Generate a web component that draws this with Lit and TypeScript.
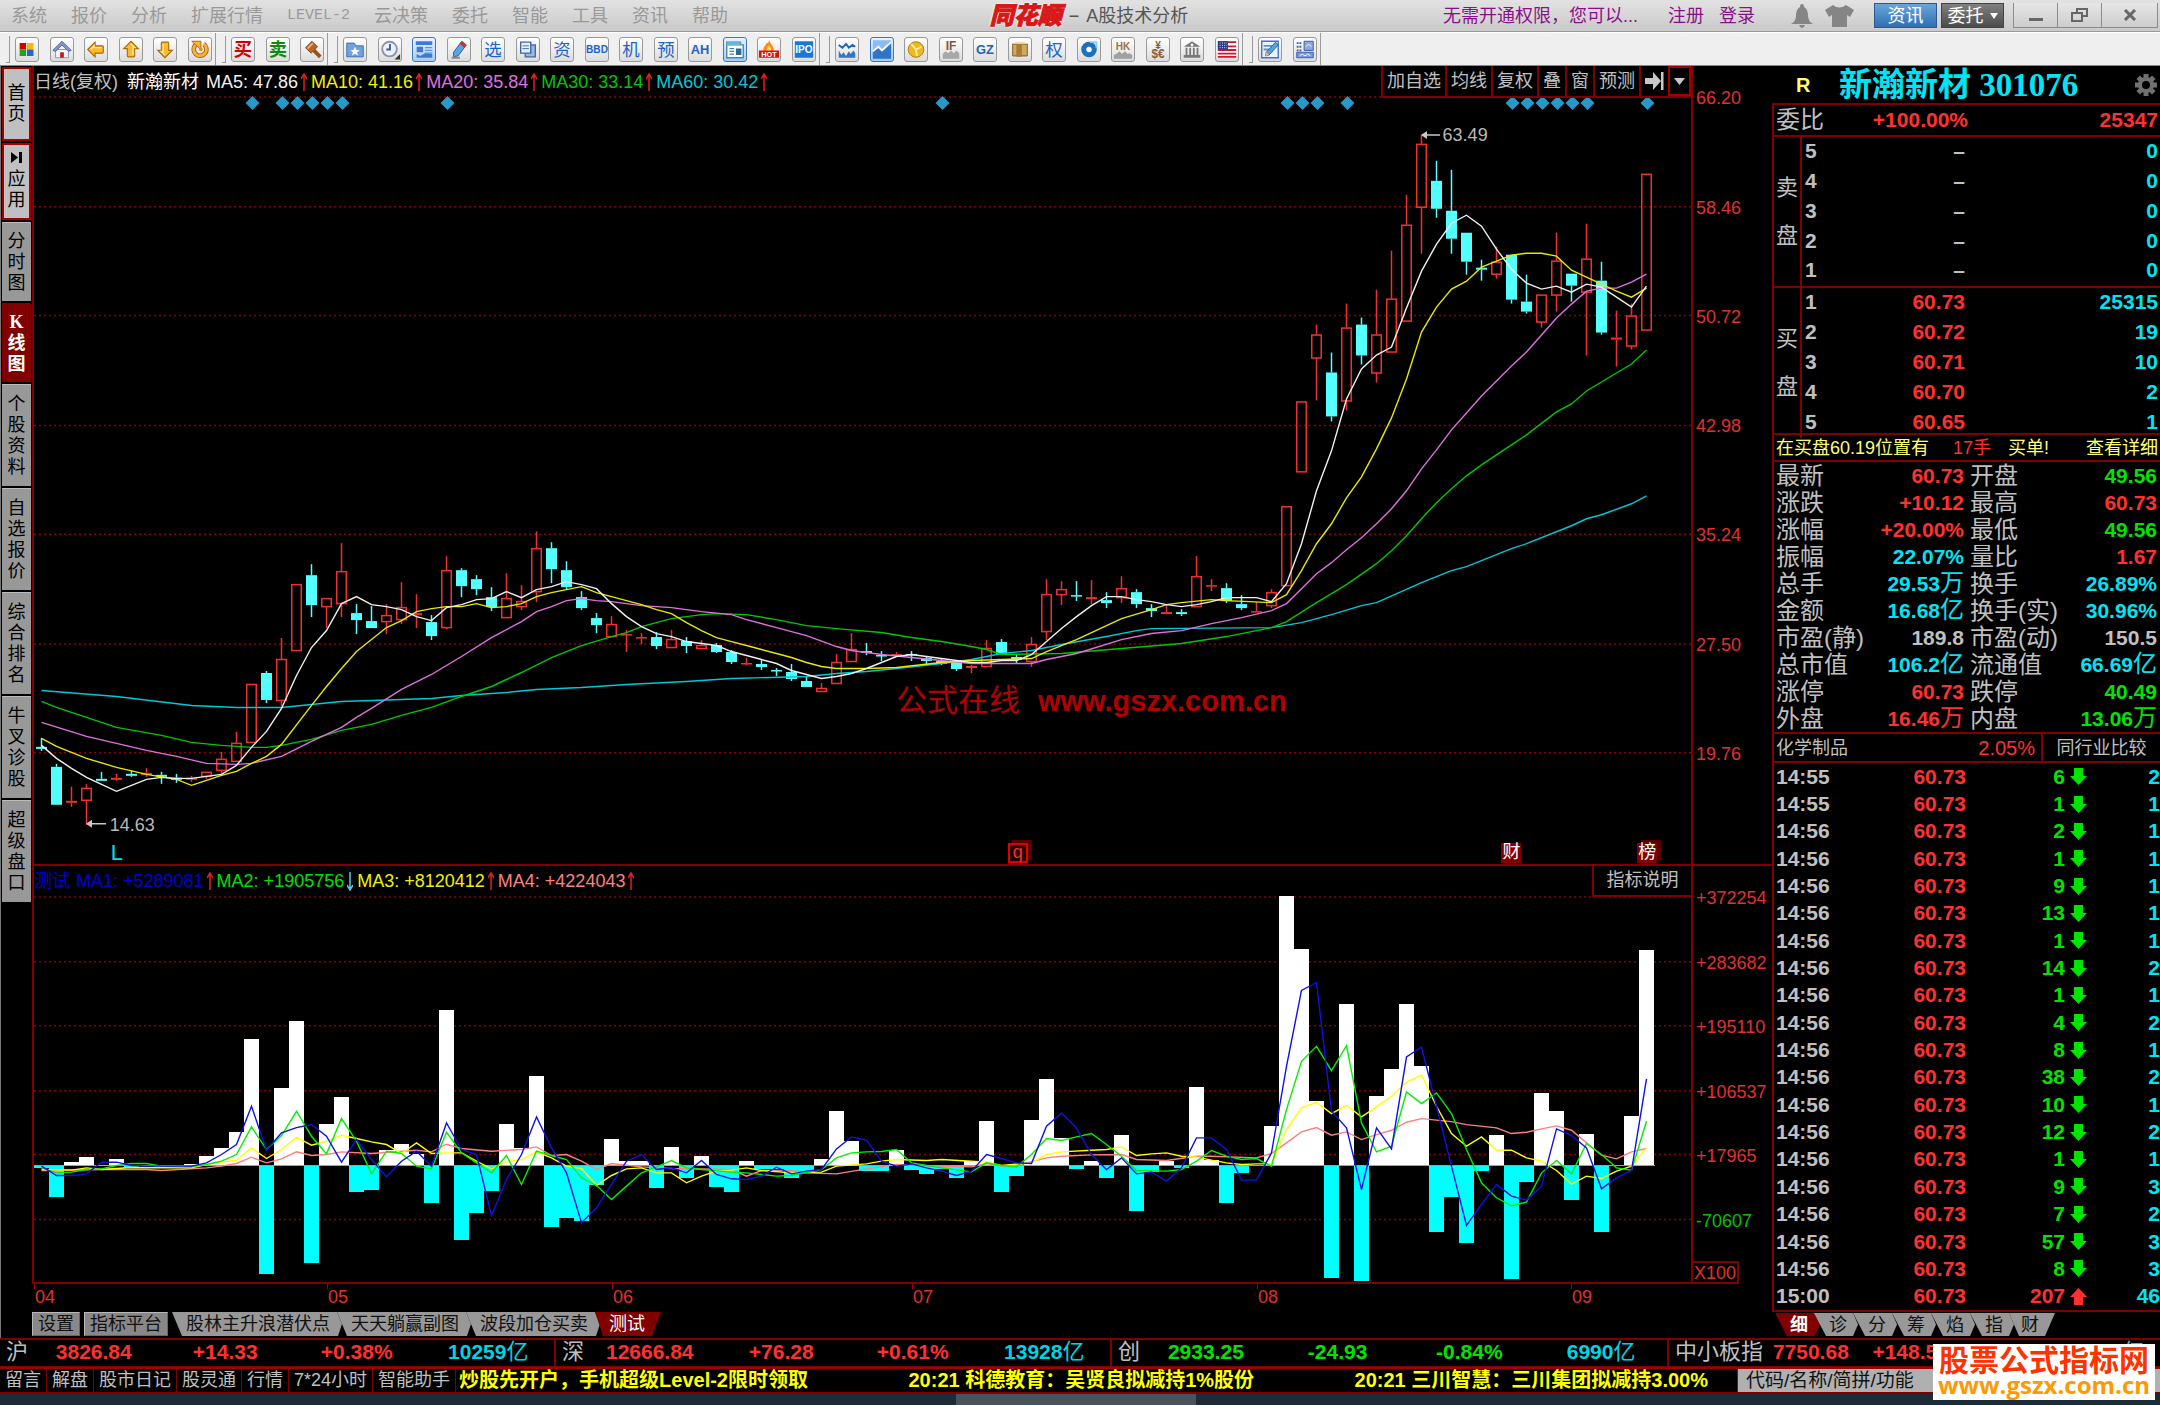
import { LitElement, html, css, svg, nothing } from "lit";
import { customElement } from "lit/decorators.js";
import { classMap } from "lit/directives/class-map.js";
import { styleMap } from "lit/directives/style-map.js";

/* ---------- data ---------- */

type Candle = [number, number, number, number, number];
type Pt = [number, number];

const STEP = 15;
const cx = (i: number) => 41.5 + STEP * i;

// up flag, body top, body bottom, high, low (plot coordinates)
const CANDLES: Candle[] = [
  [0, 748, 750, 739, 752], [0, 768, 806, 765, 806], [1, 802, 804, 788, 808], [1, 789, 801, 785, 826], [0, 780, 782, 773, 782],
  [1, 779, 781, 775, 782], [0, 775, 777, 772, 778], [1, 774, 776, 769, 778], [0, 776, 778, 773, 785], [0, 779, 781, 775, 784],
  [1, 779, 781, 777, 783], [1, 773, 777, 773, 780], [1, 760, 771, 753, 775], [1, 744, 762, 733, 762], [1, 685, 743, 685, 743],
  [0, 674, 701, 672, 704], [1, 660, 701, 639, 707], [1, 585, 651, 585, 651], [0, 576, 606, 565, 618], [1, 599, 607, 599, 629],
  [1, 572, 604, 544, 618], [0, 614, 621, 605, 635], [0, 622, 629, 607, 629], [1, 616, 622, 605, 635], [1, 608, 620, 583, 625],
  [1, 614, 616, 595, 629], [0, 623, 637, 616, 641], [1, 571, 628, 557, 630], [0, 571, 587, 569, 598], [0, 580, 590, 576, 596],
  [0, 598, 608, 588, 612], [1, 599, 618, 574, 618], [1, 602, 607, 586, 611], [1, 549, 592, 532, 603], [0, 549, 570, 543, 584],
  [0, 571, 588, 562, 590], [0, 598, 609, 592, 611], [0, 619, 626, 614, 634], [1, 625, 637, 617, 637], [1, 635, 636, 631, 653],
  [1, 638, 639, 634, 645], [0, 638, 647, 633, 650], [1, 640, 648, 631, 648], [0, 642, 647, 638, 654], [1, 646, 649, 641, 649],
  [0, 646, 653, 644, 654], [0, 653, 663, 651, 665], [1, 664, 665, 659, 666], [0, 665, 668, 661, 671], [0, 671, 672, 669, 677],
  [0, 673, 680, 665, 682], [0, 682, 688, 677, 688], [1, 689, 692, 684, 692], [1, 663, 684, 655, 684], [1, 650, 662, 634, 663],
  [0, 652, 654, 644, 656], [0, 656, 657, 652, 662], [1, 655, 657, 653, 658], [0, 655, 656, 652, 662], [0, 659, 662, 658, 666],
  [0, 662, 665, 660, 666], [0, 662, 670, 662, 672], [1, 667, 669, 666, 674], [1, 649, 667, 641, 667], [0, 643, 655, 640, 656],
  [0, 658, 661, 655, 664], [1, 645, 662, 638, 668], [1, 595, 632, 580, 641], [1, 590, 595, 582, 606], [0, 596, 597, 582, 602],
  [1, 598, 600, 581, 605], [0, 601, 604, 593, 609], [1, 589, 598, 577, 604], [0, 593, 605, 590, 609], [0, 609, 612, 605, 618],
  [1, 613, 615, 605, 615], [0, 613, 615, 610, 617], [1, 577, 607, 557, 607], [1, 586, 587, 580, 592], [0, 589, 602, 584, 604],
  [0, 605, 609, 596, 611], [1, 612, 613, 603, 613], [1, 593, 606, 590, 609], [1, 507, 586, 507, 586], [1, 402, 472, 402, 472],
  [1, 335, 358, 325, 401], [0, 373, 417, 353, 422], [1, 328, 401, 304, 411], [0, 325, 356, 318, 365], [1, 335, 373, 290, 383],
  [1, 299, 352, 251, 352], [1, 225, 321, 195, 321], [1, 144, 207, 135, 254], [0, 181, 209, 161, 218], [0, 211, 239, 170, 254],
  [0, 233, 262, 233, 275], [0, 268, 270, 260, 281], [1, 262, 274, 247, 279], [0, 255, 300, 255, 304], [0, 302, 312, 275, 314],
  [1, 295, 322, 295, 328], [1, 261, 295, 233, 312], [0, 274, 286, 274, 302], [1, 259, 292, 224, 356], [0, 281, 333, 262, 335],
  [1, 338, 340, 311, 367], [1, 316, 346, 304, 350], [1, 174, 330, 174, 330],
];

const MA_LINES: { color: string; pts: Pt[] }[] = [
  { color: "#f0f0f0", pts: [[0, 746], [1, 759], [2, 769], [3, 778], [4, 785], [5, 792], [6, 786], [7, 780], [8, 778], [9, 779], [10, 779], [11, 777], [12, 775], [13, 766], [14, 748], [15, 732], [16, 709], [17, 676], [18, 648], [19, 631], [20, 604], [21, 597], [22, 605], [23, 607], [24, 610], [25, 617], [26, 621], [27, 608], [28, 605], [29, 600], [30, 599], [31, 592], [32, 598], [33, 590], [34, 587], [35, 582], [36, 585], [37, 589], [38, 604], [39, 617], [40, 627], [41, 634], [42, 637], [43, 642], [44, 644], [45, 646], [46, 652], [47, 656], [48, 660], [49, 664], [50, 671], [51, 675], [52, 679], [53, 677], [54, 674], [55, 669], [56, 663], [57, 657], [58, 655], [59, 657], [60, 659], [61, 661], [62, 663], [63, 663], [64, 661], [65, 661], [66, 655], [67, 642], [68, 629], [69, 617], [70, 606], [71, 597], [72, 597], [73, 600], [74, 602], [75, 605], [76, 607], [77, 605], [78, 602], [79, 598], [80, 598], [81, 598], [82, 602], [83, 584], [84, 544], [85, 491], [86, 451], [87, 399], [88, 369], [89, 355], [90, 347], [91, 308], [92, 271], [93, 244], [94, 223], [95, 215], [96, 226], [97, 249], [98, 269], [99, 283], [100, 289], [101, 286], [102, 292], [103, 284], [104, 287], [105, 297], [106, 307], [107, 286]] },
  { color: "#e8e800", pts: [[0, 739], [1, 747], [3, 759], [5, 768], [7, 775], [9, 780], [10, 786], [11, 781], [12, 776], [13, 772], [14, 764], [15, 757], [16, 745], [18, 706], [19, 687], [20, 669], [21, 652], [22, 640], [23, 628], [24, 621], [25, 612], [26, 609], [27, 607], [28, 607], [29, 604], [30, 608], [31, 607], [32, 604], [33, 597], [34, 593], [35, 590], [36, 587], [37, 593], [38, 597], [39, 601], [40, 605], [41, 610], [42, 614], [43, 623], [44, 631], [45, 638], [46, 642], [47, 646], [48, 650], [49, 654], [50, 658], [51, 663], [52, 667], [53, 669], [55, 669], [57, 668], [60, 663], [62, 661], [64, 660], [66, 659], [67, 652], [69, 640], [71, 626], [72, 619], [74, 610], [75, 605], [76, 603], [78, 600], [79, 601], [82, 603], [83, 595], [84, 571], [85, 544], [86, 524], [87, 498], [88, 477], [89, 449], [90, 418], [91, 379], [92, 332], [93, 307], [94, 289], [95, 281], [96, 267], [97, 261], [98, 255], [99, 253], [100, 253], [101, 256], [102, 270], [103, 277], [104, 284], [105, 291], [106, 297], [107, 288]] },
  { color: "#e070e0", pts: [[0, 723], [3, 737], [7, 751], [9, 757], [11, 764], [13, 765], [14, 764], [16, 757], [18, 742], [20, 728], [21, 718], [22, 709], [24, 690], [26, 675], [28, 657], [30, 638], [32, 622], [33, 612], [34, 607], [35, 601], [36, 599], [37, 601], [38, 602], [40, 606], [42, 608], [44, 612], [46, 615], [47, 620], [49, 628], [51, 636], [53, 647], [54, 651], [56, 655], [58, 658], [60, 661], [62, 664], [66, 664], [67, 660], [69, 654], [72, 640], [74, 634], [76, 631], [78, 624], [80, 618], [82, 611], [83, 604], [84, 589], [85, 574], [86, 563], [87, 550], [88, 538], [89, 524], [90, 509], [91, 491], [92, 469], [93, 450], [94, 430], [95, 413], [96, 396], [97, 381], [98, 366], [99, 352], [100, 335], [101, 318], [102, 304], [103, 291], [104, 288], [105, 288], [106, 282], [107, 274]] },
  { color: "#00c800", pts: [[0, 702], [1, 708], [3, 718], [5, 728], [8, 736], [10, 743], [12, 746], [14, 748], [15, 748], [16, 746], [18, 740], [20, 731], [22, 725], [24, 716], [26, 708], [28, 697], [30, 687], [32, 673], [34, 658], [36, 646], [38, 637], [39, 633], [40, 627], [42, 619], [43, 617], [44, 615], [45, 614], [47, 615], [49, 620], [51, 626], [53, 629], [56, 633], [58, 638], [60, 642], [62, 647], [63, 650], [64, 655], [68, 654], [72, 649], [76, 644], [79, 637], [82, 628], [83, 622], [85, 603], [87, 585], [89, 564], [90, 551], [91, 536], [92, 519], [93, 503], [94, 489], [95, 476], [96, 465], [98, 445], [99, 435], [101, 412], [102, 404], [103, 391], [105, 373], [106, 364], [107, 350]] },
  { color: "#00c8d8", pts: [[0, 691], [5, 697], [10, 706], [13, 708], [16, 708], [18, 705], [20, 702], [24, 700], [26, 699], [28, 696], [31, 693], [33, 690], [36, 688], [39, 685], [43, 682], [46, 679], [51, 677], [53, 674], [55, 672], [57, 669], [60, 664], [62, 660], [64, 654], [66, 651], [68, 645], [71, 637], [73, 631], [74, 629], [82, 628], [84, 623], [86, 615], [88, 606], [89, 603], [92, 583], [94, 571], [95, 567], [98, 549], [99, 544], [102, 526], [103, 519], [104, 515], [106, 504], [107, 496]] },
];

const ZERO = 1166;
// bar tips; above ZERO is a white bar, below is a cyan one
const BARS = [1168, 1198, 1162, 1157, 1165, 1159, 1168, 1165, 1167, 1167, 1164, 1156, 1148, 1132, 1039, 1275, 1088, 1021, 1264, 1124, 1097, 1193, 1191, 1150, 1144, 1154, 1204, 1010, 1241, 1214, 1192, 1124, 1148, 1076, 1228, 1219, 1222, 1186, 1139, 1161, 1161, 1189, 1147, 1179, 1156, 1188, 1193, 1161, 1170, 1170, 1179, 1174, 1159, 1111, 1141, 1172, 1172, 1150, 1171, 1175, 1170, 1179, 1161, 1121, 1193, 1177, 1120, 1079, 1138, 1169, 1161, 1179, 1135, 1212, 1173, 1161, 1168, 1087, 1160, 1204, 1174, 1165, 1126, 896, 949, 1101, 1279, 1004, 1282, 1096, 1069, 1004, 1066, 1233, 1198, 1244, 1172, 1135, 1280, 1183, 1093, 1111, 1201, 1134, 1233, 1165, 1116, 950];

// oscillator lines keep three steps per pixel, counted from y = 840
const OSC_LINES: { color: string; pts: Pt[] }[] = [
  { color: "#ff8080", pts: [[0, 993], [4, 990], [7, 990], [8, 993], [11, 985], [12, 980], [13, 972], [14, 953], [15, 970], [16, 958], [17, 937], [18, 948], [19, 945], [20, 937], [22, 942], [25, 932], [26, 937], [27, 914], [28, 927], [30, 935], [32, 930], [33, 922], [34, 948], [35, 945], [36, 965], [37, 990], [38, 972], [40, 982], [42, 987], [46, 990], [47, 1010], [48, 993], [50, 993], [51, 1000], [53, 1003], [55, 988], [57, 975], [60, 980], [62, 982], [63, 972], [64, 980], [65, 978], [67, 955], [68, 950], [70, 946], [72, 945], [73, 960], [75, 963], [77, 950], [78, 950], [81, 955], [82, 942], [83, 910], [84, 877], [85, 864], [86, 887], [87, 877], [88, 900], [89, 885], [90, 872], [91, 848], [92, 837], [94, 846], [95, 855], [97, 865], [98, 882], [99, 878], [100, 868], [101, 859], [102, 872], [103, 910], [104, 947], [105, 958], [106, 937], [107, 927]] },
  { color: "#ffff00", pts: [[0, 990], [2, 992], [3, 985], [4, 990], [6, 984], [10, 985], [11, 975], [12, 968], [13, 962], [14, 925], [15, 957], [16, 930], [17, 893], [18, 917], [19, 905], [20, 887], [21, 897], [22, 907], [23, 915], [24, 942], [25, 910], [26, 942], [27, 940], [28, 940], [29, 965], [30, 988], [31, 967], [32, 960], [33, 937], [34, 955], [35, 980], [36, 987], [37, 1038], [38, 1008], [39, 988], [40, 985], [41, 1000], [42, 1000], [43, 1030], [44, 1010], [45, 995], [46, 992], [47, 985], [48, 993], [50, 1000], [52, 998], [53, 980], [55, 973], [56, 965], [57, 960], [59, 963], [60, 960], [62, 965], [63, 968], [64, 978], [66, 970], [67, 945], [68, 937], [70, 932], [71, 930], [72, 922], [73, 948], [74, 943], [75, 940], [76, 950], [77, 953], [78, 962], [79, 970], [80, 975], [81, 973], [82, 973], [83, 870], [84, 805], [85, 788], [86, 822], [87, 797], [88, 832], [89, 802], [90, 770], [91, 728], [92, 706], [93, 800], [94, 882], [95, 920], [96, 892], [97, 932], [98, 932], [99, 955], [100, 965], [101, 993], [102, 1034], [103, 1010], [104, 1017], [105, 995], [106, 980], [107, 925]] },
  { color: "#00f000", pts: [[0, 985], [1, 1000], [2, 998], [3, 990], [4, 988], [5, 978], [6, 972], [7, 972], [8, 980], [10, 982], [11, 975], [12, 965], [13, 945], [14, 862], [15, 930], [16, 888], [17, 815], [18, 890], [19, 943], [20, 837], [21, 905], [22, 1003], [23, 935], [24, 942], [25, 980], [26, 988], [27, 878], [28, 940], [29, 970], [30, 1000], [31, 948], [32, 1035], [33, 935], [34, 948], [35, 960], [36, 1015], [37, 1038], [38, 1080], [39, 1040], [40, 1000], [41, 982], [42, 963], [43, 985], [44, 990], [46, 998], [47, 1000], [49, 1010], [50, 1008], [52, 990], [53, 955], [54, 940], [55, 937], [56, 936], [57, 930], [58, 970], [60, 985], [62, 997], [63, 970], [64, 978], [65, 982], [66, 945], [67, 897], [68, 903], [69, 892], [70, 882], [71, 915], [72, 950], [73, 993], [75, 995], [76, 990], [77, 965], [78, 933], [79, 950], [80, 960], [81, 957], [82, 980], [83, 810], [84, 665], [85, 620], [86, 693], [87, 618], [88, 850], [89, 937], [90, 920], [91, 757], [92, 792], [93, 760], [94, 822], [95, 930], [96, 1030], [97, 1075], [98, 1099], [99, 1088], [100, 1000], [101, 963], [102, 1003], [103, 912], [104, 945], [105, 985], [106, 992], [107, 845]] },
  { color: "#1010e8", pts: [[0, 980], [1, 1008], [2, 1008], [3, 1003], [4, 968], [5, 968], [6, 978], [7, 980], [10, 980], [11, 970], [12, 945], [13, 915], [14, 800], [15, 932], [16, 880], [17, 864], [18, 855], [19, 890], [20, 968], [21, 900], [22, 960], [23, 1012], [24, 965], [25, 935], [26, 980], [27, 850], [28, 930], [29, 945], [30, 1128], [31, 1020], [32, 945], [33, 832], [34, 925], [35, 1000], [36, 1150], [37, 1105], [38, 1035], [39, 965], [40, 945], [41, 990], [42, 985], [43, 1000], [44, 963], [45, 1005], [46, 1018], [47, 1020], [48, 1010], [49, 983], [50, 1003], [51, 995], [52, 990], [53, 928], [54, 892], [55, 902], [56, 965], [57, 980], [58, 973], [59, 985], [60, 995], [61, 1008], [62, 995], [63, 945], [64, 957], [65, 970], [66, 972], [67, 860], [68, 820], [69, 865], [70, 945], [71, 990], [72, 955], [73, 1003], [74, 998], [75, 1025], [76, 985], [77, 895], [78, 895], [79, 930], [80, 1022], [81, 1022], [82, 940], [83, 680], [84, 452], [85, 428], [86, 815], [87, 865], [88, 1050], [89, 865], [90, 928], [91, 652], [92, 622], [93, 800], [94, 980], [95, 1158], [96, 1095], [97, 1035], [98, 1070], [99, 1082], [100, 1040], [101, 868], [102, 888], [103, 925], [104, 1048], [105, 1015], [106, 993], [107, 718]] },
];

const DIAMONDS = [14, 16, 17, 18, 19, 20, 27, 60, 83, 84, 85, 87, 98, 99, 100, 101, 102, 103, 107];
const PRICE_GRID: [string, number][] = [["66.20", 97], ["58.46", 207], ["50.72", 316], ["42.98", 426], ["35.24", 535], ["27.50", 645], ["19.76", 754]];
const OSC_GRID: [string, number][] = [["+372254", 897], ["+283682", 962], ["+195110", 1026], ["+106537", 1091], ["+17965", 1155], ["-70607", 1220]];
const MONTHS: [string, number][] = [["04", 34], ["05", 327], ["06", 612], ["07", 912], ["08", 1257], ["09", 1571]];

const MENU = ["系统", "报价", "分析", "扩展行情", "LEVEL-2", "云决策", "委托", "智能", "工具", "资讯", "帮助"];
const SIDE = ["首页", "应用", "分时图", "K线图", "个股资料", "自选报价", "综合排名", "牛叉诊股", "超级盘口"];
const MA_HEAD = [["MA5: 47.86", "#f0f0f0"], ["MA10: 41.16", "#f0f000"], ["MA20: 35.84", "#e070e0"], ["MA30: 33.14", "#00c800"], ["MA60: 30.42", "#00c8d8"]];
const OSC_HEAD = [["MA1: +5289081", "#0000d0", "u"], ["MA2: +1905756", "#00e000", "d"], ["MA3: +8120412", "#f0f000", "u"], ["MA4: +4224043", "#ff8080", "u"]];

const BUYS = [["1", "60.73", "25315"], ["2", "60.72", "19"], ["3", "60.71", "10"], ["4", "60.70", "2"], ["5", "60.65", "1"]];
const DETAILS = [
  ["最新", "60.73", "r", "开盘", "49.56", "g"],
  ["涨跌", "+10.12", "r", "最高", "60.73", "r"],
  ["涨幅", "+20.00%", "r", "最低", "49.56", "g"],
  ["振幅", "22.07%", "c", "量比", "1.67", "r"],
  ["总手", "29.53万", "c", "换手", "26.89%", "c"],
  ["金额", "16.68亿", "c", "换手(实)", "30.96%", "c"],
  ["市盈(静)", "189.8", "w", "市盈(动)", "150.5", "w"],
  ["总市值", "106.2亿", "c", "流通值", "66.69亿", "c"],
  ["涨停", "60.73", "r", "跌停", "40.49", "g"],
  ["外盘", "16.46万", "r", "内盘", "13.06万", "g"],
];
const TICKS: [string, number, number][] = [
  ["14:55", 6, 2], ["14:55", 1, 1], ["14:56", 2, 1], ["14:56", 1, 1], ["14:56", 9, 1], ["14:56", 13, 1], ["14:56", 1, 1],
  ["14:56", 14, 2], ["14:56", 1, 1], ["14:56", 4, 2], ["14:56", 8, 1], ["14:56", 38, 2], ["14:56", 10, 1], ["14:56", 12, 2],
  ["14:56", 1, 1], ["14:56", 9, 3], ["14:56", 7, 2], ["14:56", 57, 3], ["14:56", 8, 3], ["15:00", 207, 46],
];
const INDEXES = [
  ["沪", "3826.84", "+14.33", "+0.38%", "10259亿", "r"],
  ["深", "12666.84", "+76.28", "+0.61%", "13928亿", "r"],
  ["创", "2933.25", "-24.93", "-0.84%", "6990亿", "g"],
  ["中小板指", "7750.68", "+148.57", "+1.95%", "1797亿", "r"],
];
const LINKS = ["留言", "解盘", "股市日记", "股灵通", "行情", "7*24小时", "智能助手"];
const NEWS = ["炒股先开户，手机超级Level-2限时领取", "20:21 科德教育：吴贤良拟减持1%股份", "20:21 三川智慧：三川集团拟减持3.00%"];

// splits off a trailing unit such as 万 or 亿, which is set lighter and larger than the digits
const num = (s: string) => {
  const m = /^(.*?)([万亿])$/.exec(s);
  return m ? html`${m[1]}<span class="unit">${m[2]}</span>` : s;
};

/* ---------- toolbar icons, 24 x 24 ---------- */

const label = (t: string, color: string, size: number, y: number, bold = false) =>
  svg`<text x="12" y=${y} text-anchor="middle" font-size=${size} font-weight=${bold ? 700 : 400} fill=${color}>${t}</text>`;
const arrow = (deg: number) => svg`<path transform="rotate(${deg} 12 12)" d="M3 12 L11 4 V8 H19 Q20 8 20 9 V15 Q20 16 19 16 H11 V20 Z" fill="#fbb92c" stroke="#a86a06" stroke-width="1.2"/><path transform="rotate(${deg} 12 12)" d="M6 12 L10 8 V10 H18" fill="none" stroke="#ffe79a" stroke-width="1.5"/>`;

const ICONS: { [k: string]: [string, unknown, string?] } = {
  home4: ["版面", svg`<path d="M4 5h7v7H4z" fill="#d40000"/><path d="M12 5h7v7h-7z" fill="#ffb400"/><path d="M4 12h7v7H4z" fill="#18a818"/><path d="M12 12h7v7h-7z" fill="#2864d8"/>`],
  house: ["主页", svg`<path d="M5 12h14v9H5z" fill="#f4f4fa" stroke="#8a90a8"/><path d="M2 13 L12 3 L22 13 L19 14 L12 7 L5 14 Z" fill="#8496d6" stroke="#4a5ca6"/><path d="M10 15h4v6h-4z" fill="#c01818"/>`],
  left: ["后退", arrow(0)],
  up: ["上翻", arrow(90)],
  down: ["下翻", arrow(270)],
  cycle: ["刷新", svg`<path d="M16 6 A7 7 0 1 1 7 7" fill="none" stroke="#a86a06" stroke-width="5"/><path d="M16 6 A7 7 0 1 1 7 7" fill="none" stroke="#fbb040" stroke-width="3"/><path d="M3 3 H13 V12 Z" fill="#fbb040" stroke="#a86a06"/><circle cx="13" cy="12" r="2" fill="#e88a10"/>`],
  buy: ["买入", label("买", "#d00000", 20, 19, true)],
  sell: ["卖出", label("卖", "#108a10", 20, 19, true)],
  gavel: ["竞拍", svg`<path d="M5 10 L12 3 L18 9 L11 16 Z" fill="#b8662c" stroke="#7a4010"/><path d="M7 11 L13 5" stroke="#e8b080" stroke-width="2"/><path d="M14 13 L21 20" stroke="#9a5020" stroke-width="4"/>`],
  folder: ["自选夹", svg`<path d="M3 5h8l2 3h8v12H3z" fill="#6fa3e0" stroke="#3a6cb0"/><path d="M12 9l1.500 3.500 3.500.3-2.700 2.200.900 3.500-3.200-2-3.200 2 .9-3.500L7 12.800l3.500-.3z" fill="#fff"/>`],
  clock: ["定时", svg`<circle cx="11.500" cy="11.500" r="8" fill="#eef2fa" stroke="#8c94a4" stroke-width="2"/><path d="M12 6v6H8" fill="none" stroke="#3858a8" stroke-width="2"/><path d="M23 17v6h-6z" fill="#333"/>`],
  page: ["资讯页", svg`<path d="M3 3h18v4H3z" fill="#3c7cd0"/><path d="M4 9h7v6H4z" fill="#3c7cd0"/><path d="M13 10h8M13 13h8M13 16h8" stroke="#5a94e0" stroke-width="1.500"/><path d="M4 20v-3l4 2 5-3 8 1v4H4z" fill="#3c7cd0"/>`, "blue"],
  pen: ["画线", svg`<path d="M6 20 L6 15 L15 3 L20 7 L11 19 Z" fill="#5aa4e4" stroke="#2a5c98"/><path d="M15 3 L20 7 L18 10 L13 6 Z" fill="#d03020"/><path d="M4 21h9" stroke="#888" stroke-width="2"/>`],
  pick: ["选股", label("选", "#1e64c8", 19, 19)],
  copy: ["复制", svg`<path d="M9 7h11v13H9z" fill="#9ab8e0" stroke="#3c68a8" stroke-width="1.500"/><path d="M4 4h11v12H4z" fill="#e8f0fb" stroke="#3c68a8" stroke-width="1.500"/><path d="M6 8h7M6 11h7" stroke="#3c68a8"/>`],
  fund: ["资金", label("资", "#1e64c8", 19, 19)],
  bbd: ["BBD", label("BBD", "#1e64c8", 11, 16, true)],
  org: ["机构", label("机", "#1e64c8", 19, 19)],
  fore: ["预测", label("预", "#1e64c8", 19, 19)],
  ah: ["AH股", label("AH", "#1e64c8", 14, 17, true)],
  news: ["新闻", svg`<path d="M3 4h15v3h3v14H3z" fill="#fff" stroke="#3a88b8" stroke-width="1.500"/><path d="M3 4h15v4H3z" fill="#6cb4dc"/><path d="M6 11h5M6 14h5M6 17h5" stroke="#3a88b8" stroke-width="1.500"/><path d="M13 11h6v7h-6z" fill="#2c6890"/>`, "blue"],
  hot: ["热点", svg`<path d="M12 1 C13 6 18 8 17 14 H6 C5 9 9 8 9 5 C11 6 12 4 12 1Z" fill="#ff8a18"/><path d="M12 7 C13 10 15 10 14 14 H9 C9 11 11 10 12 7Z" fill="#ffe060"/><path d="M1 13h22v8H1z" fill="#d81010"/>${label("HOT", "#fff", 8, 20, true)}`],
  ipo: ["IPO", svg`<path d="M2 3h20v18H2z" fill="#1878d8"/>${label("IPO", "#fff", 11, 16, true)}`],
  wave: ["波段", svg`<path d="M3 7l4 3 4-4 3 4 4-3 3 2" fill="none" stroke="#1e64b8" stroke-width="2"/><path d="M3 21v-8l3 5 2-3 3 4 3-5 2 3 3-4 2 3v5z" fill="#2f78c0"/>`],
  trend: ["走势", svg`<path d="M2 2h20v20H2z" fill="#8fbcf0"/><path d="M2 22v-8l6-5 4 4 10-9v18z" fill="#2f74c8"/><path d="M2 14l6-5 4 4 10-9" fill="none" stroke="#fff" stroke-width="2"/>`, "blue"],
  coin: ["黄金", svg`<circle cx="12" cy="12" r="8.500" fill="#f0b818" stroke="#a87c08"/><path d="M12 12L7 6M12 12l6-3M12 12l1 7" stroke="#fff0a8" stroke-width="2"/>`],
  fut: ["股指期货", svg`${label("IF", "#8a5030", 13, 12, true)}<path d="M3 22v-5l3-3 3 2 3-3 3 3 3-3 3 3v6z" fill="#a8a8a8"/>`],
  gz: ["国债", label("GZ", "#1e64b0", 14, 17, true)],
  box: ["商品", svg`<path d="M4 6h16v13H4z" fill="#d0a860" stroke="#7a5a20"/><path d="M8 5h6v15H8z" fill="#a87c34"/><path d="M4 6l3-2h10l3 2z" fill="#e8d0a0"/>`],
  right: ["权证", label("权", "#1e64c8", 19, 19)],
  disc: ["基金", svg`<circle cx="12" cy="12" r="8.500" fill="#1c70c0"/><circle cx="12" cy="12" r="3" fill="#fff"/><path d="M13 4h7v6" fill="none" stroke="#8cc8f4" stroke-width="2"/>`],
  hk: ["港股", svg`${label("HK", "#a07048", 11, 12, true)}<path d="M2 22v-4l4-2 2-2 3 3 3-3 3 3 2-1 3 2v4z" fill="#a0a0a0"/>`],
  fx: ["外汇", svg`${label("¥", "#8a5c34", 11, 11, true)}${label("$€", "#8a5c34", 13, 21, true)}`],
  bank: ["宏观", svg`<path d="M12 3l9 6H3z" fill="#787878"/><path d="M6 10v8M10 10v8M14 10v8M18 10v8" stroke="#787878" stroke-width="2"/><path d="M3 18h18v3H3z" fill="#787878"/><circle cx="12" cy="7" r="1.500" fill="#fff"/>`],
  us: ["美股", svg`<path d="M2 3h20v18H2z" fill="#fff"/><path d="M2 4h20M2 8.500h20M2 12.500h20M2 16.500h20M2 20h20" stroke="#d0182c" stroke-width="2"/><path d="M2 3h11v9H2z" fill="#28388c"/><path d="M4 5h8M4 7.500h8M4 10h8" stroke="#fff" stroke-dasharray="1 1.500"/>`],
  edit: ["编辑", svg`<path d="M3 3h18v18H3z" fill="#eaf2fc" stroke="#3c74c0" stroke-width="1.500"/><path d="M5 8h10M5 12h6" stroke="#5a90d8" stroke-width="2"/><path d="M7 19 L8 15 L18 4 L21 7 L11 18 Z" fill="#58a0e0" stroke="#2c5c90"/><path d="M7 19 L8 15 L11 18 Z" fill="#f0c080"/>`],
  grid: ["版式", svg`<path d="M3 5h6M3 9h6M3 13h6" stroke="#3858a8" stroke-width="2" stroke-dasharray="2 1"/><path d="M11 3h10v10H11z" fill="#8ca8e0" stroke="#3858a8"/><path d="M3 15h18v6H3z" fill="#7898dc" stroke="#3858a8"/><path d="M6 19l3-2 3 2 3-2 3 2" stroke="#fff" fill="none"/><path d="M13 9l3-3 3 3" stroke="#fff" fill="none"/>`],
};
const GROUPS: { cls: string; items: string[] }[] = [
  { cls: "g6", items: ["home4", "house", "left", "up", "down", "cycle"] },
  { cls: "g3", items: ["buy", "sell", "gavel"] },
  { cls: "g14", items: ["folder", "clock", "page", "pen", "pick", "copy", "fund", "bbd", "org", "fore", "ah", "news", "hot", "ipo"] },
  { cls: "g12", items: ["wave", "trend", "coin", "fut", "gz", "box", "right", "disc", "hk", "fx", "bank", "us"] },
  { cls: "g2", items: ["edit", "grid"] },
];

const base = css`
  * { box-sizing: border-box; }
  button, input, a { font: inherit; color: inherit; margin: 0; padding: 0; border: 0; border-radius: 0; background: none; text-decoration: none; white-space: nowrap; }
  svg { display: block; }
`;

/* ---------- title and toolbar ---------- */

@customElement("title-bar")
class TitleBar extends LitElement {
  static styles = [base, css`
    :host { display: block; }
    .bar { display: grid; grid-template-columns: 1fr auto 1fr; align-items: center; height: 32px; background: linear-gradient(#e2e2e2, #cacaca); border-bottom: 1px solid #9a9a9a; font-size: 18px; line-height: 26px; }
    .menu { display: flex; gap: 24px; padding-left: 11px; color: #999; }
    .level { font-family: "Liberation Mono", monospace; font-size: 15px; }
    .title { display: flex; align-items: center; gap: 7px; padding-left: 18px; color: #555; }
    .logo { font-size: 24px; font-weight: 900; font-style: italic; color: #d81818; -webkit-text-stroke: 1px #d81818; text-shadow: 0 0 3px #fff, 0 0 3px #fff, 0 0 2px #fff; }
    .right { display: flex; justify-content: flex-end; align-items: center; padding-right: 2px; color: #8a108a; }
    .link { margin-left: 15px; }
    .link.first { margin-left: 30px; }
    .bell { margin-left: 36px; }
    .shirt { margin: 0 20px 0 12px; }
    .pill { width: 63px; height: 25px; margin-right: 4px; color: #fff; border: 1px solid #2a5a90; background: linear-gradient(#6aa6dc, #2f6fb2); line-height: 22px; }
    .pill.dark { display: flex; align-items: center; justify-content: center; gap: 6px; margin-right: 9px; border-color: #444; background: linear-gradient(#808080, #4c4c4c); }
    .win { display: grid; place-items: center; width: 44px; height: 25px; border: 1px solid #8c8c8c; border-top: 0; border-right: 0; background: linear-gradient(#e6e6e6, #cdcdcd); }
    .win.close { width: 57px; border-right: 1px solid #8c8c8c; }
    .tools { display: flex; align-items: center; height: 34px; background: #efefef; border-top: 1px solid #fff; border-bottom: 1px solid #888; }
    .group { display: flex; justify-content: space-between; flex: none; }
    .g6 { width: 197px; } .g3 { width: 93px; } .g14 { width: 473px; } .g12 { width: 404px; } .g2 { width: 59px; }
    .grip { width: 4px; height: 27px; margin: 0 5px 0 6px; border-right: 1px solid #999; border-bottom: 1px solid #999; flex: none; }
    .sep { width: 1px; height: 32px; margin-left: 3px; background: #9a9a9a; flex: none; }
    .ico { width: 24px; height: 25px; border: 1px solid #999; border-radius: 3px; background: linear-gradient(#fff, #dcdcdc); overflow: hidden; }
    .ico.blue { border-color: #3c78b8; background: linear-gradient(#e8f3ff, #a8ccf0); }
    .ico svg { width: 22px; height: 23px; }
  `];
  render() {
    return html`
      <header class="bar">
        <nav class="menu">${MENU.map((m) => html`<button class=${classMap({ level: m === "LEVEL-2" })}>${m}</button>`)}</nav>
        <div class="title"><span class="logo">同花顺</span><span>−</span><span>A股技术分析</span></div>
        <div class="right">
          <span>无需开通权限，您可以...</span>
          <a class="link first" href="#">注册</a><a class="link" href="#">登录</a>
          <svg class="bell" width="22" height="24" viewBox="0 0 22 24"><path d="M11 0 Q13 0 13 3 Q17 5 17 12 Q17 17 22 20 H0 Q5 17 5 12 Q5 5 9 3 Q9 0 11 0Z M8 21 H14 Q13 24 11 24 Q9 24 8 21Z" fill="#858585"/></svg>
          <svg class="shirt" width="29" height="22" viewBox="0 0 29 22"><path d="M8 0 Q14 5 21 0 L29 5 L25 12 L22 10 V22 H7 V10 L4 12 L0 5 Z" fill="#858585"/></svg>
          <button class="pill">资讯</button>
          <button class="pill dark">委托<svg width="8" height="6" viewBox="0 0 8 6"><path d="M0 0H8L4 6Z" fill="#fff"/></svg></button>
          <button class="win" aria-label="最小化"><svg width="14" height="12" viewBox="0 0 14 12"><path d="M0 9h14v3H0z" fill="#666"/></svg></button>
          <button class="win" aria-label="还原"><svg width="17" height="14" viewBox="0 0 17 14"><path d="M6 4V1h10v7h-4M1 5h10v8H1z" fill="none" stroke="#666" stroke-width="2"/></svg></button>
          <button class="win close" aria-label="关闭"><svg width="14" height="12" viewBox="0 0 14 12"><path d="M2 1l10 10M12 1L2 11" stroke="#666" stroke-width="3"/></svg></button>
        </div>
      </header>
      <div class="tools">
        ${GROUPS.map((g) => html`<span class="grip"></span>
          <div class="group ${g.cls}">${g.items.map((k) => html`<button class="ico ${ICONS[k][2] ?? ""}" aria-label=${ICONS[k][0]}><svg viewBox="0 0 24 24">${ICONS[k][1]}</svg></button>`)}</div>
          <span class="sep"></span>`)}
      </div>`;
  }
}

/* ---------- charts ---------- */

const poly = (pts: Pt[], color: string, y: (v: number) => number) =>
  svg`<polyline points=${pts.map(([i, v]) => `${cx(i)},${y(v)}`).join(" ")} fill="none" stroke=${color} stroke-width="1.4"/>`;
const gridLine = (y: number) => svg`<path d="M34 ${y}H1692" stroke="#8c0000" stroke-width="1.500" stroke-dasharray="2 3"/>`;
const trendArrow = (dir: string) => html`<svg class="ta" width="6" height="20" viewBox="0 0 6 20">${dir === "u"
  ? svg`<path d="M3 3V19M0 7L3 2L6 7" fill="none" stroke="#e02020" stroke-width="1.500"/>`
  : svg`<path d="M3 1V17M0 14L3 19L6 14" fill="none" stroke="#60c8e0" stroke-width="1.500"/>`}</svg>`;

@customElement("stock-chart")
class StockChart extends LitElement {
  static styles = [base, css`
    :host { display: flex; flex-direction: column; min-width: 0; font-size: 18px; line-height: 20px; color: #c0c0c0; }
    .pane { display: grid; grid-template-columns: minmax(0, 1fr) 79px; }
    .price { flex: 799 1 0; }
    .osc { flex: 419 1 0; border-top: 2px solid #800000; }
    .plot { position: relative; border-right: 2px solid #800000; border-left: 2px solid #800000; }
    .osc .plot { border-bottom: 2px solid #800000; }
    .axis { position: relative; color: #e03030; }
    .canvas { position: absolute; inset: 0; width: 100%; height: 100%; }
    .head { position: relative; display: flex; justify-content: space-between; align-items: flex-start; }
    .legend { display: flex; align-items: center; gap: 4px; height: 31px; white-space: nowrap; }
    .legend .name { color: #fff; margin: 0 3px 0 5px; }
    .legend .ta { margin-left: -1px; }
    .test { color: #0000d0; margin-right: 2px; }
    .acts { display: flex; border-bottom: 2px solid #800000; background: #000; }
    .acts button { display: flex; align-items: center; height: 30px; padding: 0 4px; border-left: 2px solid #800000; }
    .acts .drop { border: 2px solid #a00000; padding: 0 4px; }
    .acts .go { padding: 0 4px; }
    .note { height: 31px; width: 99px; border-left: 2px solid #800000; border-bottom: 2px solid #800000; background: #000; }
    .mark { position: absolute; margin-top: -10px; white-space: nowrap; }
    .axis .mark { left: 3px; }
    .neg { color: #00c000; }
    .gray { color: #b8b8b8; }
    .lmark { color: #00e0f0; font-size: 22px; }
    .wm { color: #b00000; font-size: 31px; line-height: 40px; margin-top: -19px; display: flex; gap: 18px; }
    .wm b { font-size: 29px; }
    .tag { width: 20px; height: 20px; text-align: center; color: #fff; background: #800000; line-height: 19px; }
    .tag.sh { box-shadow: 4px -3px #580000; }
    .tag.q { background: #200000; border: 2px solid #e00000; color: #ff3030; line-height: 15px; }
    .x100 { position: absolute; left: 0; bottom: 0; height: 23px; border: 2px solid #800000; border-left: 0; padding: 0 1px; }
    .months { position: relative; height: 27px; color: #e03030; display: grid; margin-right: 79px; }
    .months .mark { margin-top: 0; top: 3px; padding-left: 1px; }
    .months .mark::before { content: ""; position: absolute; left: 0; top: -3px; height: 5px; width: 1px; background: #a00000; }
    .tabs { display: flex; height: 27px; padding: 1px 0 2px; color: #111; }
    .tabs button { height: 24px; background: #989898; line-height: 22px; }
    .tabs .sq { padding: 0 5px; margin-right: 4px; border: 1px solid #b8b8b8; border-right-color: #666; border-bottom-color: #666; background: #888; }
    .tabs .tab { padding: 0 12px 0 14px; margin-right: -5px; clip-path: polygon(0 0, calc(100% - 5px) 0, 100% 50%, calc(100% - 4px) 100%, 10px 100%); }
    .tabs .tab.on { background: #800000; color: #fff; padding: 0 16px 0 14px; clip-path: polygon(0 0, 100% 0, calc(100% - 9px) 100%, 8px 100%); }
  `];
  private at(x: number, y: number, top: number, h: number) {
    return styleMap({ left: `${((x - 32) / 1661) * 100}%`, top: `${((y - top) / h) * 100}%` });
  }
  private candle(c: Candle, i: number) {
    const [up, t, b, hi, lo] = c;
    const x = cx(i);
    const color = up ? "#f03030" : "#54ffff";
    const flat = b - t <= 2;
    return svg`${hi < t ? svg`<path d="M${x} ${hi}V${t}" stroke=${color} stroke-width="1.500"/>` : nothing}
      ${lo > b ? svg`<path d="M${x} ${b}V${lo}" stroke=${color} stroke-width="1.500"/>` : nothing}
      ${up && !flat
        ? svg`<rect x=${x - 4.75} y=${t + 0.5} width="9.500" height=${b - t} fill="none" stroke=${color} stroke-width="1.500"/>`
        : svg`<rect x=${x - 5.5} y=${t} width="11" height=${Math.max(b - t, 1.5)} fill=${color}/>`}`;
  }
  render() {
    const p = (x: number, y: number) => this.at(x, y, 66, 799);
    return html`
      <section class="pane price">
        <div class="plot">
          <svg class="canvas" viewBox="34 66 1657 799" preserveAspectRatio="none">
            ${PRICE_GRID.map(([, y]) => gridLine(y))}
            ${DIAMONDS.map((i) => svg`<path d="M${cx(i) + 1} 96l7 7-7 7-7-7z" fill="#2898c8"/>`)}
            ${CANDLES.map((c, i) => this.candle(c, i))}
            ${MA_LINES.slice().reverse().map((l) => poly(l.pts, l.color, (v) => v + 0.5))}
            <path d="M1422 135h18M87 825h19" stroke="#c8c8c8" stroke-width="1.500"/>
            <path d="M1421 135l6-4v8zM86 825l6-4v8z" fill="#c8c8c8"/>
          </svg>
          <div class="head">
            <div class="legend"><span>日线(复权)</span><span class="name">新瀚新材</span>
              ${MA_HEAD.map(([t, c]) => html`<span style=${styleMap({ color: c })}>${t}</span>${trendArrow("u")}`)}</div>
            <div class="acts">${["加自选", "均线", "复权", "叠", "窗", "预测"].map((t) => html`<button>${t}</button>`)}
              <button class="go" aria-label="跳到最新"><svg width="19" height="18" viewBox="0 0 19 18"><path d="M0 6h8V0l8 9-8 9v-6H0zM16 0h2.500v18H16z" fill="#c8c8c8"/></svg></button>
              <button class="drop" aria-label="更多"><svg width="11" height="7" viewBox="0 0 11 7"><path d="M0 0h11L5.500 7z" fill="#c8c8c8"/></svg></button></div>
          </div>
          <span class="mark gray" style=${p(1444, 135)}>63.49</span>
          <span class="mark gray" style=${p(108, 826)}>14.63</span>
          <span class="mark lmark" style=${p(109, 854)}>L</span>
          <span class="mark wm" style=${p(896, 701)}><span>公式在线</span><b>www.gszx.com.cn</b></span>
          <span class="mark tag q sh" style=${p(1008, 854)}>q</span>
          <span class="mark tag" style=${p(1503, 854)}>财</span>
          <span class="mark tag sh" style=${p(1639, 854)}>榜</span>
        </div>
        <div class="axis">${PRICE_GRID.map(([t, y]) => html`<span class="mark" style=${styleMap({ top: `${((y - 65) / 799) * 100}%` })}>${t}</span>`)}</div>
      </section>
      <section class="pane osc">
        <div class="plot">
          <svg class="canvas" viewBox="34 866 1657 417" preserveAspectRatio="none">
            ${OSC_GRID.map(([, y]) => gridLine(y))}
            ${BARS.map((t, i) => svg`<rect x=${cx(i) - 7.5} y=${Math.min(t, ZERO)} width="15" height=${Math.abs(t - ZERO)} fill=${t < ZERO ? "#fff" : "#0ff"} shape-rendering="crispEdges"/>`)}
            <path d="M34 1166H1655" stroke="#8aa"/>
            ${OSC_LINES.map((l) => poly(l.pts, l.color, (v) => 840 + v / 3))}
          </svg>
          <div class="head">
            <div class="legend"><span class="test">测试</span>${OSC_HEAD.map(([t, c, d]) => html`<span style=${styleMap({ color: c })}>${t}</span>${trendArrow(d)}`)}</div>
            <button class="note">指标说明</button>
          </div>
        </div>
        <div class="axis">${OSC_GRID.map(([t, y]) => html`<span class="mark ${t[0] === "-" ? "neg" : ""}" style=${styleMap({ top: `${((y - 865) / 418) * 100}%` })}>${t}</span>`)}
          <span class="x100">X100</span></div>
      </section>
      <div class="months">${MONTHS.map(([t, x]) => html`<span class="mark" style=${styleMap({ left: `${((x - 32) / 1661) * 100}%` })}>${t}</span>`)}</div>
      <nav class="tabs"><button class="sq">设置</button><button class="sq">指标平台</button>
        <button class="tab">股林主升浪潜伏点</button><button class="tab">天天躺赢副图</button><button class="tab">波段加仓买卖</button><button class="tab on">测试</button></nav>`;
  }
}

/* ---------- quote panel ---------- */

@customElement("quote-panel")
class QuotePanel extends LitElement {
  static styles = [base, css`
    :host { display: flex; flex-direction: column; font-size: 21px; font-weight: 700; color: #c0c0c0; line-height: 26px; }
    .body { flex: 1; display: flex; flex-direction: column; border-left: 2px solid #800000; border-bottom: 2px solid #800000; }
    .head { display: flex; align-items: center; height: 37px; padding: 0 3px 0 24px; }
    .r { color: #ff3030; } .g { color: #00e400; } .c { color: #00e4f4; } .w { color: #c0c0c0; }
    .flag { color: #ffff70; font-size: 20px; width: 43px; }
    .name { flex: 1; margin: 0; color: #00e4f4; font-family: "Liberation Serif", "Noto Sans CJK SC", serif; font-size: 33px; line-height: 36px; font-weight: 700; white-space: nowrap; }
    .cjk { font-size: 24px; font-weight: 400; }
    .unit { font-size: 24px; font-weight: 400; line-height: 20px; }
    table { border-collapse: collapse; width: 100%; table-layout: fixed; }
    td, th { padding: 0; font-weight: inherit; text-align: right; white-space: nowrap; }
    th { text-align: left; }
    .ratio { display: grid; grid-template-columns: 60px 132px 1fr; align-items: center; height: 34px; padding: 0 2px; border-top: 2px solid #800000; border-bottom: 2px solid #800000; text-align: right; }
    .ratio .cjk { text-align: left; }
    .book { border-bottom: 2px solid #800000; }
    .book.buy { margin-bottom: -5px; border-bottom: 0; }
    .book td, .book th { height: 30px; padding-bottom: 3px; line-height: 26px; }
    .book th.side { width: 27px; border-right: 2px solid #800000; font-size: 22px; font-weight: 400; line-height: 48px; text-align: center; white-space: normal; padding: 0 2px; }
    .book .lv { width: 22px; padding-left: 3px; text-align: left; }
    .book .px { width: 142px; }
    .book .qty { padding-right: 2px; }
    .alert { display: flex; align-items: center; height: 29px; padding: 0 2px; border-top: 2px solid #800000; border-bottom: 2px solid #800000; font-size: 18px; font-weight: 400; color: #ffff70; white-space: nowrap; }
    .alert .hand { margin-left: 24px; } .alert .say { margin: 0 auto 0 17px; }
    .detail td, .detail th { height: 27px; line-height: 26px; }
    .detail th { padding-left: 2px; width: 80px; }
    .detail .a { width: 110px; } .detail .b { padding-right: 3px; } .detail .t2 { padding-left: 6px; width: 96px; }
    .ind { display: grid; grid-template-columns: 1fr auto 119px; align-items: center; height: 31px; border-top: 2px solid #800000; border-bottom: 2px solid #800000; font-size: 18px; font-weight: 400; padding-left: 2px; }
    .ind .pct { font-size: 20px; padding-right: 6px; }
    .ind button { height: 27px; border-left: 2px solid #800000; }
    .ticks { flex: 1; }
    .ticks td, .ticks th { line-height: 26px; }
    .ticks th { width: 90px; padding-left: 2px; } .ticks .px { width: 102px; } .ticks .vol { width: 99px; } .ticks .dir { width: 24px; padding-left: 5px; }
    .tabs { display: flex; height: 26px; padding: 1px 0 1px 3px; font-size: 18px; font-weight: 400; color: #111; }
    .tabs button { height: 23px; width: 44px; margin-right: -5px; padding-left: 4px; background: #989898; line-height: 22px; clip-path: polygon(0 0, 39px 0, 100% 50%, 39px 100%, 12px 100%); }
    .tabs .on { position: relative; width: 50px; margin-right: -11px; padding: 0 2px 0 0; background: #800000; color: #fff; font-weight: 700; clip-path: polygon(0 0, 100% 0, 40px 100%, 12px 100%); }
    .tabs .last { width: 46px; padding: 0 4px 0 0; clip-path: polygon(0 0, 100% 0, 36px 100%, 10px 100%); }
  `];
  private book(side: string, rows: string[][], buy: boolean) {
    return html`<table class="book ${buy ? "buy" : ""}"><tbody>${rows.map(([l, p, q], i) => html`<tr>
      ${i === 0 ? html`<th class="side" rowspan="5">${side}</th>` : nothing}
      <th class="lv">${l}</th><td class="px ${buy ? "r" : "w"}">${p}</td><td class="qty c">${q}</td></tr>`)}</tbody></table>`;
  }
  render() {
    return html`
      <div class="head"><span class="flag">R</span><h1 class="name">新瀚新材 301076</h1>
        <button aria-label="设置"><svg width="22" height="22" viewBox="-11 -11 22 22"><g fill="#707070">${[0, 45, 90, 135].map((d) => svg`<rect x="-2.500" y="-11" width="5" height="22" transform="rotate(${d})"/>`)}</g><circle r="6" fill="none" stroke="#707070" stroke-width="4"/><circle r="4" fill="#000"/></svg></button></div>
      <div class="body">
        <div class="ratio"><span class="cjk">委比</span><span class="r">+100.00%</span><span class="r">25347</span></div>
        ${this.book("卖盘", ["5", "4", "3", "2", "1"].map((l) => [l, "–", "0"]), false)}
        ${this.book("买盘", BUYS, true)}
        <div class="alert"><span>在买盘60.19位置有</span><span class="hand r">17手</span><span class="say">买单!</span><a href="#">查看详细</a></div>
        <table class="detail"><tbody>${DETAILS.map(([a, v, k, b, u, m]) => html`<tr><th class="cjk">${a}</th><td class="a ${k}">${num(v)}</td><th class="t2 cjk">${b}</th><td class="b ${m}">${num(u)}</td></tr>`)}</tbody></table>
        <div class="ind"><span>化学制品</span><span class="pct r">2.05%</span><button>同行业比较</button></div>
        <table class="ticks"><tbody>${TICKS.map(([t, v, n]) => {
          const up = t === "15:00";
          return html`<tr><th>${t}</th><td class="px r">60.73</td><td class="vol ${up ? "r" : "g"}">${v}</td>
            <td class="dir"><svg width="17" height="17" viewBox="0 0 17 17"><path d=${up ? "M8.500 0L17 9H13V17H4V9H0Z" : "M8.500 17L17 8H13V0H4V8H0Z"} fill=${up ? "#ff3030" : "#00e400"}/></svg></td>
            <td class="c">${n}</td></tr>`;
        })}</tbody></table>
      </div>
      <nav class="tabs">${["细", "诊", "分", "筹", "焰", "指", "财"].map((t, i) => html`<button class=${classMap({ on: i === 0, last: i === 6 })}>${t}</button>`)}</nav>`;
  }
}

/* ---------- page ---------- */

@customElement("app-root")
class AppRoot extends LitElement {
  static styles = [base, css`
    :host { position: relative; display: flex; flex-direction: column; min-height: 100vh; overflow: hidden; background: #000; font-family: "Liberation Sans", "Noto Sans CJK SC", sans-serif; color: #c0c0c0; }
    .main { flex: 1; display: grid; grid-template-columns: 32px minmax(0, 1fr) 388px; }
    .side { display: flex; flex-direction: column; gap: 2px; padding: 1px 1px 0 1px; border-left: 1px solid #777; }
    .side button { display: flex; flex-direction: column; align-items: center; justify-content: center; height: 102px; background: #989898; color: #000; font-size: 18px; line-height: 21px; white-space: normal; border-top: 1px solid #bbb; }
    .side .pale { height: 74px; background: #c0c0c0; border: 2px solid #a00000; }
    .side .pale.app { height: 77px; }
    .side .mid { height: 79px; }
    .side .on { background: #800000; border-color: #800000; color: #fff; font-weight: 700; }
    .side svg { margin-bottom: 6px; }
    .k { font-family: "Liberation Serif", serif; }
    .idx { display: grid; grid-template-columns: 556fr 556fr 557fr 491fr; height: 29px; border-top: 2px solid #800000; border-bottom: 1px solid #800000; font-size: 21px; font-weight: 700; line-height: 23px; }
    .cell { display: grid; grid-template-columns: 22px repeat(4, minmax(0, 1fr)); text-align: center; white-space: nowrap; border-right: 2px solid #800000; padding-left: 6px; }
    .cell.wide { grid-template-columns: 86px repeat(4, minmax(0, 1fr)); border-right: 0; }
    .cell .nm, .unit { font-weight: 400; font-size: 22px; }
    .cell .nm { text-align: left; }
    .r { color: #ff3030; } .g { color: #00e400; } .c { color: #00d4e4; }
    .news { display: flex; align-items: stretch; height: 27px; border-top: 2px solid #a00000; border-bottom: 2px solid #800000; font-size: 18px; line-height: 22px; }
    .news a { padding: 0 5px; border-right: 1px solid #800000; }
    .roll { flex: 1; display: flex; justify-content: space-between; padding: 0 29px 0 3px; font-size: 20px; color: #ffff00; font-weight: 700; white-space: nowrap; min-width: 0; overflow: hidden; }
    .news input { width: 423px; padding-left: 8px; background: #b0b0b0; border-left: 1px solid #a00000; color: #111; font-size: 19px; }
    .news input::placeholder { color: #111; opacity: 1; }
    .strip { height: 11px; background: #1c2b36; display: grid; grid-template-columns: 956fr 240fr 964fr; }
    .strip span { background: #48545d; grid-column: 2; }
    .wm { position: absolute; right: 5px; bottom: 5px; width: 222px; height: 56px; background: #fff; text-align: center; font-weight: 700; white-space: nowrap; }
    .wm .l1 { display: block; color: #ff3300; font-size: 30px; line-height: 34px; }
    .wm .l2 { display: block; color: #ff9900; font-family: "Open Sans", sans-serif; font-size: 24px; line-height: 14px; }
  `];
  render() {
    return html`
      <title-bar></title-bar>
      <main class="main">
        <nav class="side">${SIDE.map((t, i) => html`<button class=${classMap({ pale: i < 2, app: i === 1, mid: i === 2 || i === 3, on: i === 3 })}>
          ${i === 1 ? html`<svg width="12" height="11" viewBox="0 0 12 11"><path d="M0 0l7 5.500L0 11zM8 0h3v11H8z" fill="#000"/></svg>` : nothing}
          ${[...t].map((ch) => html`<span class=${ch === "K" ? "k" : ""}>${ch}</span>`)}</button>`)}</nav>
        <stock-chart></stock-chart>
        <quote-panel></quote-panel>
      </main>
      <section class="idx">${INDEXES.map(([n, a, b, c, d, k], i) => html`<div class="cell ${i === 3 ? "wide" : ""}"><span class="nm">${n}</span><span class=${k}>${a}</span><span class=${k}>${b}</span><span class=${k}>${c}</span><span class="c">${num(d)}</span></div>`)}</section>
      <footer class="news">${LINKS.map((l) => html`<a href="#">${l}</a>`)}
        <div class="roll">${NEWS.map((n) => html`<span>${n}</span>`)}</div>
        <input type="text" aria-label="代码/名称/简拼/功能" placeholder="代码/名称/简拼/功能"></footer>
      <div class="strip"><span></span></div>
      <div class="wm"><span class="l1">股票公式指标网</span><span class="l2">www.gszx.com.cn</span></div>`;
  }
}
